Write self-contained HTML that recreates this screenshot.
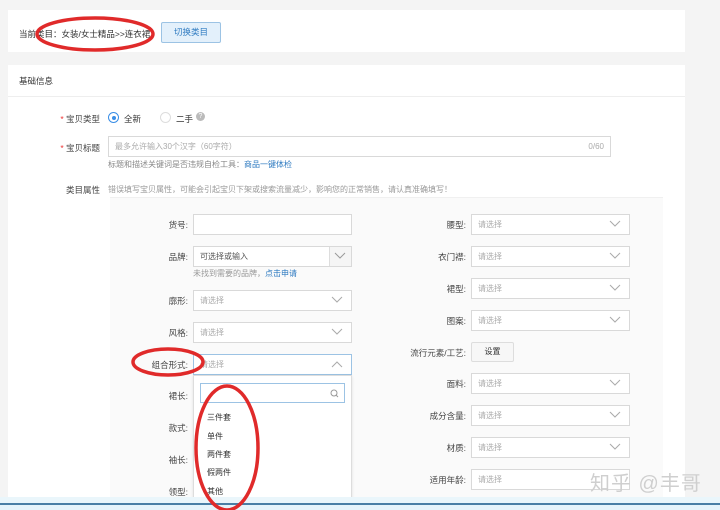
<!DOCTYPE html>
<html style="width:720px;height:510px;overflow:hidden"><head><meta charset="utf-8"><style>
*{margin:0;padding:0;box-sizing:border-box}
body{width:720px;height:510px;overflow:hidden;background:#f4f4f4;font-family:"Liberation Sans","Noto Sans CJK SC",sans-serif;font-size:8.5px;color:#333;position:relative}
.a{position:absolute;white-space:nowrap}
.p{position:absolute;background:#fff}
.inp{position:absolute;height:21px;border:1px solid #d9d9d9;background:#fff;color:#aaa;font-size:8px;line-height:19px;padding-left:6px}
.lab{position:absolute;text-align:right;font-size:8.5px;color:#444;white-space:nowrap}
.chev{position:absolute;right:8px;top:5px;width:12px;height:8px}
</style></head><body>
<div class="p" style="left:8px;top:10px;width:677px;height:42px"></div>
<div class="a" style="left:19px;top:28px;font-size:8.5px">当前类目：女装/女士精品&gt;&gt;连衣裙</div>
<div class="a" style="left:161px;top:22px;width:60px;height:21px;background:#e3f0fb;border:1px solid #9cc3e4;border-radius:2px;color:#2f7bc1;font-size:8.5px;text-align:center;line-height:19px">切换类目</div>

<div class="p" style="left:8px;top:65px;width:677px;height:445px"></div>
<div class="a" style="left:8px;top:96px;width:677px;height:1px;background:#eee"></div>
<div class="a" style="left:19px;top:75px">基础信息</div>

<div class="lab" style="left:50px;width:50px;top:113px"><span style="color:#e33">*</span> 宝贝类型</div>
<div class="a" style="left:108px;top:112px;width:11px;height:11px;border:1px solid #3a8ee6;border-radius:50%"><div style="position:absolute;left:2.5px;top:2.5px;width:4px;height:4px;background:#3a8ee6;border-radius:50%"></div></div>
<div class="a" style="left:124px;top:113px">全新</div>
<div class="a" style="left:160px;top:112px;width:11px;height:11px;border:1px solid #ddd;border-radius:50%"></div>
<div class="a" style="left:176px;top:113px">二手</div>
<div class="a" style="left:196px;top:112px;width:9px;height:9px;background:#bbb;border-radius:50%;color:#fff;font-size:7px;text-align:center;line-height:9px">?</div>

<div class="lab" style="left:50px;width:50px;top:142px"><span style="color:#e33">*</span> 宝贝标题</div>
<div class="inp" style="left:108px;top:136px;width:503px">最多允许输入30个汉字（60字符）<span style="position:absolute;right:6px">0/60</span></div>
<div class="a" style="left:108px;top:159px;font-size:8px;color:#888">标题和描述关键词是否违规自检工具：<span style="color:#2f7bc1">商品一键体检</span></div>

<div class="lab" style="left:50px;width:50px;top:184px">类目属性</div>
<div class="a" style="left:108px;top:184px;font-size:8px;color:#999">错误填写宝贝属性，可能会引起宝贝下架或搜索流量减少，影响您的正常销售，请认真准确填写！</div>
<div class="a" style="left:110px;top:197px;width:553px;height:313px;background:#fafafa;border-top:1px solid #f0f0f0"></div>

<div class="lab" style="left:120px;width:68px;top:219px">货号:</div>
<div class="inp" style="left:193px;top:214px;width:159px"></div>
<div class="lab" style="left:120px;width:68px;top:251px">品牌:</div>
<div class="inp" style="left:193px;top:246px;width:159px;color:#555">可选择或输入<div style="position:absolute;right:0;top:0;width:22px;height:19px;border-left:1px solid #ddd;background:#f5f5f5"><svg class="chev" style="right:5px" viewBox="0 0 12 8"><path d="M1 1l5 5 5-5" stroke="#999" fill="none"/></svg></div></div>
<div class="a" style="left:193px;top:268px;font-size:8px;color:#999">未找到需要的品牌，<span style="color:#2f7bc1">点击申请</span></div>
<div class="lab" style="left:120px;width:68px;top:295px">廓形:</div>
<div class="inp" style="left:193px;top:290px;width:159px">请选择<svg class="chev" viewBox="0 0 12 8"><path d="M1 1l5 5 5-5" stroke="#aaa" fill="none"/></svg></div>
<div class="lab" style="left:120px;width:68px;top:327px">风格:</div>
<div class="inp" style="left:193px;top:322px;width:159px">请选择<svg class="chev" viewBox="0 0 12 8"><path d="M1 1l5 5 5-5" stroke="#aaa" fill="none"/></svg></div>
<div class="lab" style="left:120px;width:68px;top:359px">组合形式:</div>
<div class="inp" style="left:193px;top:354px;width:159px;border-color:#9cc3e4">请选择<svg class="chev" viewBox="0 0 12 8"><path d="M1 7l5-5 5 5" stroke="#aaa" fill="none"/></svg></div>
<div class="lab" style="left:120px;width:68px;top:390px">裙长:</div>
<div class="lab" style="left:120px;width:68px;top:422px">款式:</div>
<div class="lab" style="left:120px;width:68px;top:454px">袖长:</div>
<div class="lab" style="left:120px;width:68px;top:486px">领型:</div>
<div class="a" style="left:193px;top:375px;width:159px;height:135px;background:#fff;border:1px solid #ddd;box-shadow:0 1px 3px rgba(0,0,0,.1)"></div>
<div class="a" style="left:200px;top:383px;width:145px;height:20px;border:1px solid #9cc3e4;background:#fff"><svg style="position:absolute;right:5px;top:5px" width="9" height="9" viewBox="0 0 9 9"><circle cx="4" cy="4" r="3" stroke="#999" fill="none"/><path d="M6 6l2 2" stroke="#999"/></svg></div>
<div class="a" style="left:207px;top:412px;font-size:8px">三件套</div>
<div class="a" style="left:207px;top:431px;font-size:8px">单件</div>
<div class="a" style="left:207px;top:449px;font-size:8px">两件套</div>
<div class="a" style="left:207px;top:467px;font-size:8px">假两件</div>
<div class="a" style="left:207px;top:486px;font-size:8px">其他</div>

<div class="lab" style="left:390px;width:76px;top:219px">腰型:</div>
<div class="inp" style="left:471px;top:214px;width:159px">请选择<svg class="chev" viewBox="0 0 12 8"><path d="M1 1l5 5 5-5" stroke="#aaa" fill="none"/></svg></div>
<div class="lab" style="left:390px;width:76px;top:251px">衣门襟:</div>
<div class="inp" style="left:471px;top:246px;width:159px">请选择<svg class="chev" viewBox="0 0 12 8"><path d="M1 1l5 5 5-5" stroke="#aaa" fill="none"/></svg></div>
<div class="lab" style="left:390px;width:76px;top:283px">裙型:</div>
<div class="inp" style="left:471px;top:278px;width:159px">请选择<svg class="chev" viewBox="0 0 12 8"><path d="M1 1l5 5 5-5" stroke="#aaa" fill="none"/></svg></div>
<div class="lab" style="left:390px;width:76px;top:315px">图案:</div>
<div class="inp" style="left:471px;top:310px;width:159px">请选择<svg class="chev" viewBox="0 0 12 8"><path d="M1 1l5 5 5-5" stroke="#aaa" fill="none"/></svg></div>
<div class="lab" style="left:380px;width:86px;top:347px">流行元素/工艺:</div>
<div class="a" style="left:471px;top:342px;width:43px;height:20px;border:1px solid #ddd;background:#f7f7f7;border-radius:2px;text-align:center;line-height:18px;font-size:8px">设置</div>
<div class="lab" style="left:390px;width:76px;top:378px">面料:</div>
<div class="inp" style="left:471px;top:373px;width:159px">请选择<svg class="chev" viewBox="0 0 12 8"><path d="M1 1l5 5 5-5" stroke="#aaa" fill="none"/></svg></div>
<div class="lab" style="left:390px;width:76px;top:410px">成分含量:</div>
<div class="inp" style="left:471px;top:405px;width:159px">请选择<svg class="chev" viewBox="0 0 12 8"><path d="M1 1l5 5 5-5" stroke="#aaa" fill="none"/></svg></div>
<div class="lab" style="left:390px;width:76px;top:442px">材质:</div>
<div class="inp" style="left:471px;top:437px;width:159px">请选择<svg class="chev" viewBox="0 0 12 8"><path d="M1 1l5 5 5-5" stroke="#aaa" fill="none"/></svg></div>
<div class="lab" style="left:390px;width:76px;top:474px">适用年龄:</div>
<div class="inp" style="left:471px;top:469px;width:159px">请选择</div>
<div class="inp" style="left:471px;top:500px;width:159px;height:10px"></div>

<div class="a" style="left:590px;top:467px;font-size:20px;color:#cfcfcf;letter-spacing:1px">知乎 @丰哥</div>

<div class="a" style="left:0;top:497px;width:720px;height:7px;background:#eaf6fb"></div>
<div class="a" style="left:0;top:503px;width:720px;height:2px;background:#4a7fa6"></div>
<div class="a" style="left:0;top:505px;width:720px;height:5px;background:#e6f4fb"></div>

<svg class="a" style="left:0;top:0" width="720" height="510">
<ellipse cx="95" cy="34" rx="58" ry="16" stroke="#e02a2a" stroke-width="3.5" fill="none"/>
<ellipse cx="168" cy="362" rx="35" ry="13" stroke="#e02a2a" stroke-width="3.5" fill="none"/>
<ellipse cx="227" cy="448" rx="31" ry="62" stroke="#e02a2a" stroke-width="3.5" fill="none"/>
</svg>
</body></html>
